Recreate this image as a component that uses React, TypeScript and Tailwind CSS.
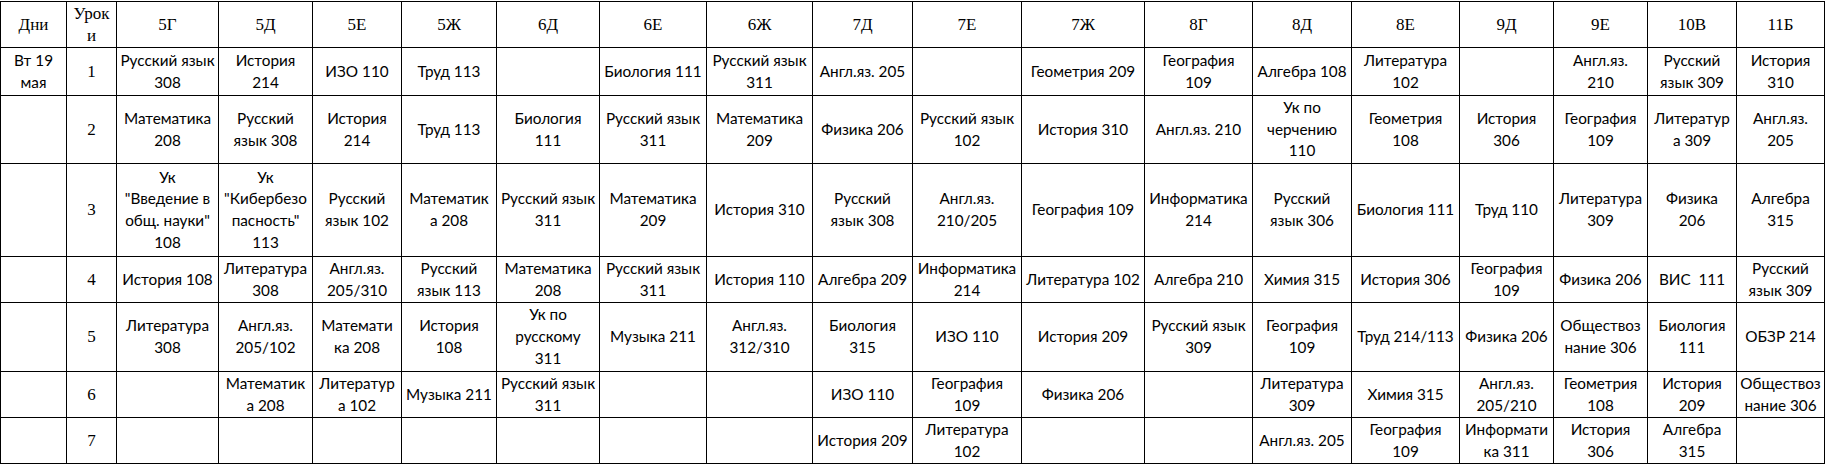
import React from "react";

const headers = ["5Г","5Д","5Е","5Ж","6Д","6Е","6Ж","7Д","7Е","7Ж","8Г","8Д","8Е","9Д","9Е","10В","11Б"];

const rows: string[][] = [
  ["Русский язык|308","История|214","ИЗО 110","Труд 113","","Биология 111","Русский язык|311","Англ.яз. 205","","Геометрия 209","География|109","Алгебра 108","Литература|102","","Англ.яз.|210","Русский|язык 309","История|310"],
  ["Математика|208","Русский|язык 308","История|214","Труд 113","Биология|111","Русский язык|311","Математика|209","Физика 206","Русский язык|102","История 310","Англ.яз. 210","Ук по|черчению|110","Геометрия|108","История|306","География|109","Литератур|а 309","Англ.яз.|205"],
  ["Ук|\"Введение в|общ. науки\"|108","Ук|\"Кибербезо|пасность\"|113","Русский|язык 102","Математик|а 208","Русский язык|311","Математика|209","История 310","Русский|язык 308","Англ.яз.|210/205","География 109","Информатика|214","Русский|язык 306","Биология 111","Труд 110","Литература|309","Физика|206","Алгебра|315"],
  ["История 108","Литература|308","Англ.яз.|205/310","Русский|язык 113","Математика|208","Русский язык|311","История 110","Алгебра 209","Информатика|214","Литература 102","Алгебра 210","Химия 315","История 306","География|109","Физика 206","ВИС\u00a0\u00a0111","Русский|язык 309"],
  ["Литература|308","Англ.яз.|205/102","Математи|ка 208","История|108","Ук по|русскому|311","Музыка 211","Англ.яз.|312/310","Биология|315","ИЗО 110","История 209","Русский язык|309","География|109","Труд 214/113","Физика 206","Обществоз|нание 306","Биология|111","ОБЗР 214"],
  ["","Математик|а 208","Литератур|а 102","Музыка 211","Русский язык|311","","","ИЗО 110","География|109","Физика 206","","Литература|309","Химия 315","Англ.яз.|205/210","Геометрия|108","История|209","Обществоз|нание 306"],
  ["","","","","","","","История 209","Литература|102","","","Англ.яз. 205","География|109","Информати|ка 311","История|306","Алгебра|315",""],
];

const cellBase = "border-r border-b border-black flex flex-col items-center justify-center text-center text-black";
const sans = "font-['Lato','Noto_Sans',sans-serif] text-[15.3px] leading-[21.7px]";
const serif = "font-['Liberation_Serif','Times_New_Roman',serif] text-[17px] leading-[21.7px]";

function Lines({ text }: { text: string }) {
  if (!text) return null;
  return (
    <>
      {text.split("|").map((l, i) => (
        <span key={i} className="whitespace-pre">{l}</span>
      ))}
    </>
  );
}

export default function App() {
  return (
    <div className="w-[1827px] h-[466px] bg-white pt-px">
      <div className="grid grid-cols-[66px_50px_102px_94px_89px_95px_103px_107px_106px_100px_109px_123px_108px_99px_108px_94px_94px_89px_88px] grid-rows-[46px_48px_68px_93px_46px_69px_46px_46px] w-[1825px] border-l border-t border-black">
        <div className={`${cellBase} ${serif}`}>Дни</div>
        <div className={`${cellBase} ${serif}`}>
          <span>Урок</span>
          <span>и</span>
        </div>
        {headers.map((h) => (
          <div key={h} className={`${cellBase} ${serif}`}>{h}</div>
        ))}
        {rows.map((r, ri) => (
          <React.Fragment key={ri}>
            <div className={`${cellBase} ${sans}`}>
              {ri === 0 ? <Lines text="Вт 19|мая" /> : null}
            </div>
            <div className={`${cellBase} ${serif}`}>{ri + 1}</div>
            {r.map((c, ci) => (
              <div key={ci} className={`${cellBase} ${sans}`}>
                <Lines text={c} />
              </div>
            ))}
          </React.Fragment>
        ))}
      </div>
    </div>
  );
}
